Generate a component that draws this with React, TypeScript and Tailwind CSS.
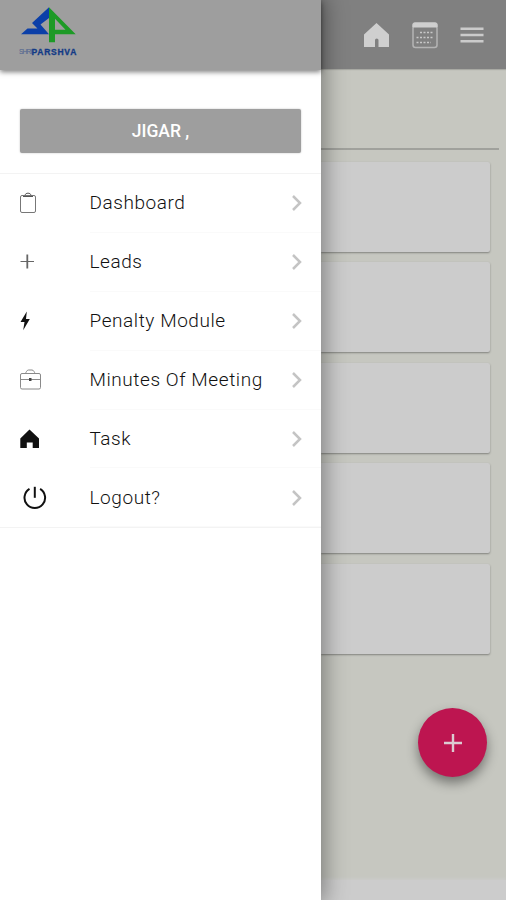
import React from 'react';

const ClipboardIcon = () => (
  <svg width="18" height="22" viewBox="0 0 18 22" fill="none" stroke="#777" strokeWidth="1">
    <rect x="1.500" y="3.500" width="15" height="17" rx="1.500" />
    <path d="M4 4.500h10M6 3.200C6.500 .5 11.500 .5 12 3.200" stroke="#555" />
  </svg>
);

const PlusIcon = () => (
  <svg width="16" height="16" viewBox="0 0 16 16" fill="none" stroke="#666">
    <path d="M.5 7.500H14" strokeWidth="1" />
    <path d="M7.300 .5v14" strokeWidth="1.800" />
  </svg>
);

const BoltIcon = () => (
  <svg width="12" height="20" viewBox="0 0 12 20" fill="#111">
    <path d="M6.800 .5 .5 11h4L3.200 19.200 9.800 8H6Z" />
  </svg>
);

const BriefcaseIcon = () => (
  <svg width="23" height="23" viewBox="0 0 23 23" fill="none" stroke="#8a8a8a" strokeWidth="1">
    <rect x="1.500" y="4.500" width="20" height="15.500" rx="1.500" />
    <path d="M1.500 10.500h20" />
    <path d="M6 4.500C7.500 3.500 7.500 1 9.500 1h3.500C15 1 15 3.500 16.500 4.500" />
    <rect x="10.500" y="9.500" width="1.500" height="2" fill="#444" stroke="#444" />
  </svg>
);

const HouseIcon = () => (
  <svg width="20" height="20" viewBox="0 0 20 20" fill="#111">
    <path d="M9.500 .5 19 9.500V19h-6.300v-5.500H6.800V19H.3V9.500Z" />
  </svg>
);

const PowerIcon = () => (
  <svg width="24" height="24" viewBox="0 0 24 24" fill="none" stroke="#111" strokeWidth="2">
    <path d="M11.800 .8v11" />
    <path d="M6.500 2.900a10.300 10.300 0 1 0 10.600 0" />
  </svg>
);

const menuItems = [
  { label: 'Dashboard', icon: <ClipboardIcon />, offset: 'pl-[19px]' },
  { label: 'Leads', icon: <PlusIcon />, offset: 'pl-5' },
  { label: 'Penalty Module', icon: <BoltIcon />, offset: 'pl-5' },
  { label: 'Minutes Of Meeting', icon: <BriefcaseIcon />, offset: 'pl-[18.5px]' },
  { label: 'Task', icon: <HouseIcon />, offset: 'pl-5' },
  { label: 'Logout?', icon: <PowerIcon />, offset: 'pl-[23px]' },
];

const Logo = () => (
  <div className="ml-[19px] w-[60px] pt-[7px]">
    <svg width="60" height="37" viewBox="0 0 60 37">
      <path d="M30 .3 13 16 18.500 21.500H8.500L2 27.200h28L21.500 17.500 30 11Z" fill="#0b3fa8" />
      <path d="M30 .3V35.300h6V27.200h20.700L30 .3Zm6 11.500L46.500 22.700H36Z" fill="#1d9a26" fillRule="evenodd" />
    </svg>
    <div className="mt-[3px] flex items-center font-['Liberation_Sans'] text-[8.5px] leading-[10px] font-black text-[#123a86]">
      <span className="w-[12.5px] text-[6.5px] font-normal tracking-[-0.8px] opacity-60">SHRI</span>
      <span className="tracking-[0.75px] [-webkit-text-stroke:0.3px_#123a86]">PARSHVA</span>
    </div>
  </div>
);

const Drawer = () => (
  <aside className="relative z-10 flex h-full w-[320.5px] shrink-0 flex-col bg-white shadow-[0_0_22px_3px_rgba(0,0,0,0.4)]">
    <div className="h-[70px] shrink-0 bg-[#9e9e9e] shadow-[0_2px_5px_rgba(0,0,0,0.5)]">
      <Logo />
    </div>
    <div className="px-5 pt-[39px] pb-5">
      <div className="flex h-[44px] w-[281px] items-center justify-center rounded-[2px] bg-[#9e9e9e] pt-px text-[17.5px] font-medium text-white shadow-[0_0_2px_rgba(0,0,0,0.25)]">
        JIGAR ,
      </div>
    </div>
    <ul className="border-y border-[#f3f3f3]">
      {menuItems.map((item) => (
        <li key={item.label} className="flex h-[58.9px] items-center">
          <span className={`w-[89.5px] shrink-0 ${item.offset}`}>{item.icon}</span>
          <span className="flex h-full flex-1 items-center justify-between border-b border-[#fafafa] pt-px text-[19px] font-light tracking-[0.57px] whitespace-nowrap text-[#111]">
            {item.label}
            <svg className="mr-[19px]" width="10" height="16" viewBox="0 0 10 16" fill="none" stroke="#c4c4c4" strokeWidth="2.500">
              <path d="m1 1 7 7-7 7" />
            </svg>
          </span>
        </li>
      ))}
    </ul>
  </aside>
);

const Toolbar = () => (
  <header className="flex h-[69px] shrink-0 items-center bg-[#808080] pl-[43.5px] shadow-[0_1px_1px_rgba(0,0,0,0.15)]">
    <svg width="26" height="26" viewBox="0 0 26 26" fill="#cfcfcf">
      <path d="M12.500 1 25 12.500V25H14.500v-7q0-1.500-1.750-1.500T11 18v7H0V12.500Z" />
    </svg>
    <svg className="ml-[21px]" width="28" height="28" viewBox="0 0 28 28" fill="none">
      <rect x="2" y="2" width="24" height="24.500" rx="2.500" stroke="#b4b4b4" strokeWidth="1.500" />
      <path d="M2 6V3.500Q2 2 3.500 2h21Q26 2 26 3.500V6Z" fill="#cfcfcf" stroke="#cfcfcf" />
      <path d="M9 11.500h14M5.500 16.500H23M5.500 21.500H20" stroke="#c8c8c8" strokeWidth="1.600" strokeDasharray="2 1.500" />
    </svg>
    <svg className="ml-[21px]" width="24" height="18" viewBox="0 0 24 18" stroke="#cbcbcb" strokeWidth="2.600">
      <path d="M.5 2.800h23M.5 9h23M.5 15.200h23" />
    </svg>
  </header>
);

const App = () => {
  return (
    <div className="flex h-[900px] w-[506px] overflow-hidden bg-[#c6c7c0] font-['Roboto',sans-serif]">
      <Drawer />
      <main className="relative flex min-w-0 flex-1 flex-col">
        <Toolbar />
        <div className="mr-[7px] h-[81px] border-b-2 border-[#a0a19c]" />
        <div className="mt-3 mr-4 flex flex-col gap-[10.4px]">
          {[1, 2, 3, 4, 5].map((n) => (
            <div key={n} className="h-[90px] rounded-r-[2px] bg-[#cccccc] shadow-[0_1px_2px_rgba(0,0,0,0.35)]" />
          ))}
        </div>
        <div className="mt-auto h-5 bg-[#cccccc] shadow-[0_-1px_3px_#cccccc]" />
        <button className="absolute right-[19px] bottom-[123px] flex h-[69px] w-[69px] items-center justify-center rounded-full bg-[#bd1550] shadow-[0_6px_12px_rgba(0,0,0,0.42)]">
          <svg width="18" height="18" viewBox="0 0 18 18" stroke="#dccbd1" strokeWidth="2.400">
            <path d="M9 0v18M0 9h18" />
          </svg>
        </button>
      </main>
    </div>
  );
};

export default App;
